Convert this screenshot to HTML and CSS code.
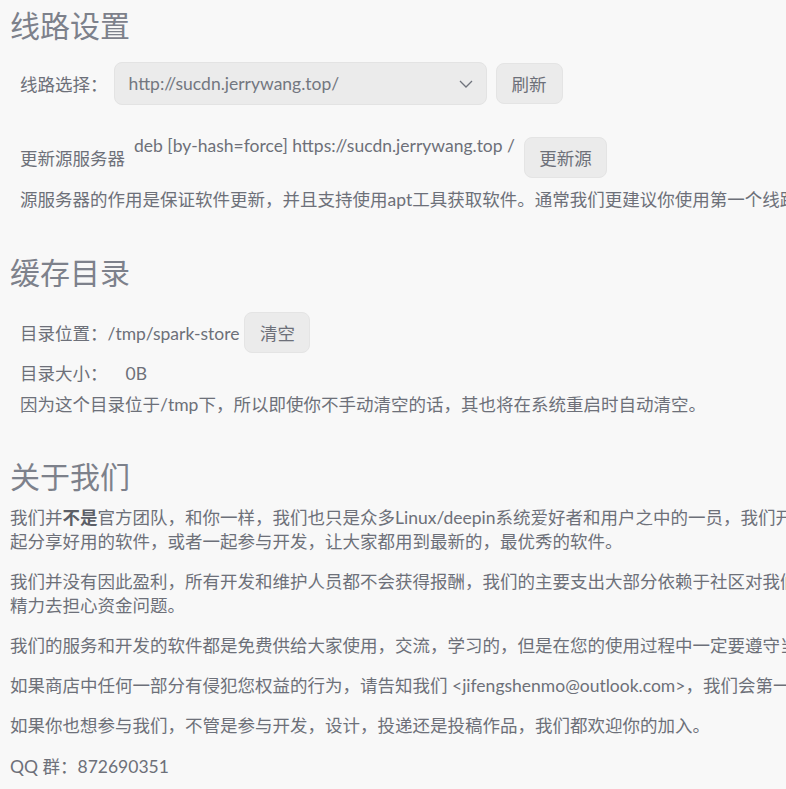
FILE: index.html
```html
<!DOCTYPE html>
<html lang="zh-CN">
<head>
  <meta charset="UTF-8" />
  <title>设置</title>
  <link rel="stylesheet" href="styles.css">
</head>
<body>
  <div class="page">

    <h1 class="titulo">线路设置</h1>

    <div class="fila fila-linea">
      <span class="etiqueta">线路选择：</span>
      <div class="selector">
        <span>http://sucdn.jerrywang.top/</span>
        <svg class="flecha" width="14" height="8" viewBox="0 0 14 8"><path d="M1 1l6 6 6-6" fill="none" stroke="#6f737c" stroke-width="1.3"/></svg>
      </div>
      <button class="btn">刷新</button>
    </div>

    <div class="fila fila-fuente">
      <span class="etiqueta">更新源服务器</span>
      <span class="fuente">deb [by-hash=force] https://sucdn.jerrywang.top /</span>
      <button class="btn btn-ancho">更新源</button>
    </div>

    <p class="nota">源服务器的作用是保证软件更新，并且支持使用apt工具获取软件。通常我们更建议你使用第一个线路作为更新源，一般是最稳定的。</p>

    <h1 class="titulo titulo-2">缓存目录</h1>

    <div class="fila fila-cache">
      <span class="etiqueta">目录位置：/tmp/spark-store</span>
      <button class="btn">清空</button>
    </div>
    <p class="nota nota-tam">目录大小：<span class="tam">0B</span></p>
    <p class="nota nota-tmp">因为这个目录位于/tmp下，所以即使你不手动清空的话，其也将在系统重启时自动清空。</p>

    <h1 class="titulo titulo-3">关于我们</h1>

    <div class="acerca">
      <p>我们并<b>不是</b>官方团队，和你一样，我们也只是众多Linux/deepin系统爱好者和用户之中的一员，我们开发并运营这个“星火应用商店”，是为了让社区一起分享好用的软件，或者一起参与开发，让大家都用到最新的，最优秀的软件。</p>
      <p>我们并没有因此盈利，所有开发和维护人员都不会获得报酬，我们的主要支出大部分依赖于社区对我们的捐助，感谢大家，捐助使我们不需要耗费太多精力去担心资金问题。</p>
      <p>我们的服务和开发的软件都是免费供给大家使用，交流，学习的，但是在您的使用过程中一定要遵守当地的法律法规，否则出现任何问题和我们无关。</p>
      <p>如果商店中任何一部分有侵犯您权益的行为，请告知我们 &lt;jifengshenmo@outlook.com&gt;，我们会第一时间删除侵权内容。</p>
      <p>如果你也想参与我们，不管是参与开发，设计，投递还是投稿作品，我们都欢迎你的加入。</p>
      <p class="qq">QQ 群：872690351</p>
    </div>

  </div>
</body>
</html>
```

FILE: styles.css
```css
body {
  margin: 0;
  background: #f8f8f8;
  color: #6d7079;
  font-family: Lato, "Noto Sans CJK SC", sans-serif;
  font-size: 17.5px;
  overflow: hidden;
}

.page {
  width: 1170px;
  padding-top: 4px;
}

.titulo {
  margin: 0;
  padding-left: 10px;
  font-family: "Noto Sans CJK SC", sans-serif;
  font-size: 30px;
  line-height: 40px;
  font-weight: normal;
  color: #7d818b;
}

.titulo-2 {
  margin-top: 39px;
}

.titulo-3 {
  margin-top: 38px;
}

.fila {
  display: flex;
  align-items: center;
  padding-left: 20px;
}

.fila-linea {
  margin-top: 18px;
}

.fila-linea .etiqueta {
  margin-right: 6px;
}

.selector {
  box-sizing: border-box;
  width: 373px;
  height: 43px;
  display: flex;
  align-items: center;
  justify-content: space-between;
  padding: 0 13px 0 14px;
  background: #ebebeb;
  border: 1px solid #e3e3e3;
  border-radius: 8px;
  color: #737780;
}

.btn {
  box-sizing: border-box;
  height: 41px;
  width: 67px;
  padding: 0;
  margin-left: 9px;
  font-family: inherit;
  font-size: 17.5px;
  color: #6d7079;
  background: #ebebeb;
  border: 1px solid #e4e4e4;
  border-radius: 8px;
}

.btn-ancho {
  width: 83px;
}

.fila-fuente {
  margin-top: 32px;
}

.fuente {
  align-self: flex-start;
  margin-left: 9px;
  line-height: 18px;
}

.nota {
  margin: 10px 0 0;
  padding-left: 20px;
  line-height: 24px;
  white-space: nowrap;
}

.fila-cache {
  margin-top: 21px;
}

.fila-cache .btn {
  margin-left: 5px;
  width: 66px;
}

.nota-tam {
  margin-top: 9px;
}

.tam {
  margin-left: 18px;
}

.nota-tmp {
  margin-top: 7px;
}

.acerca {
  margin-top: 11px;
  padding-left: 10px;
}

.acerca p {
  margin: 0 0 16px;
  line-height: 24px;
}

.acerca b {
  font-weight: bold;
  color: #5c5f67;
}

.acerca .qq {
  margin-top: 17px;
}
```
